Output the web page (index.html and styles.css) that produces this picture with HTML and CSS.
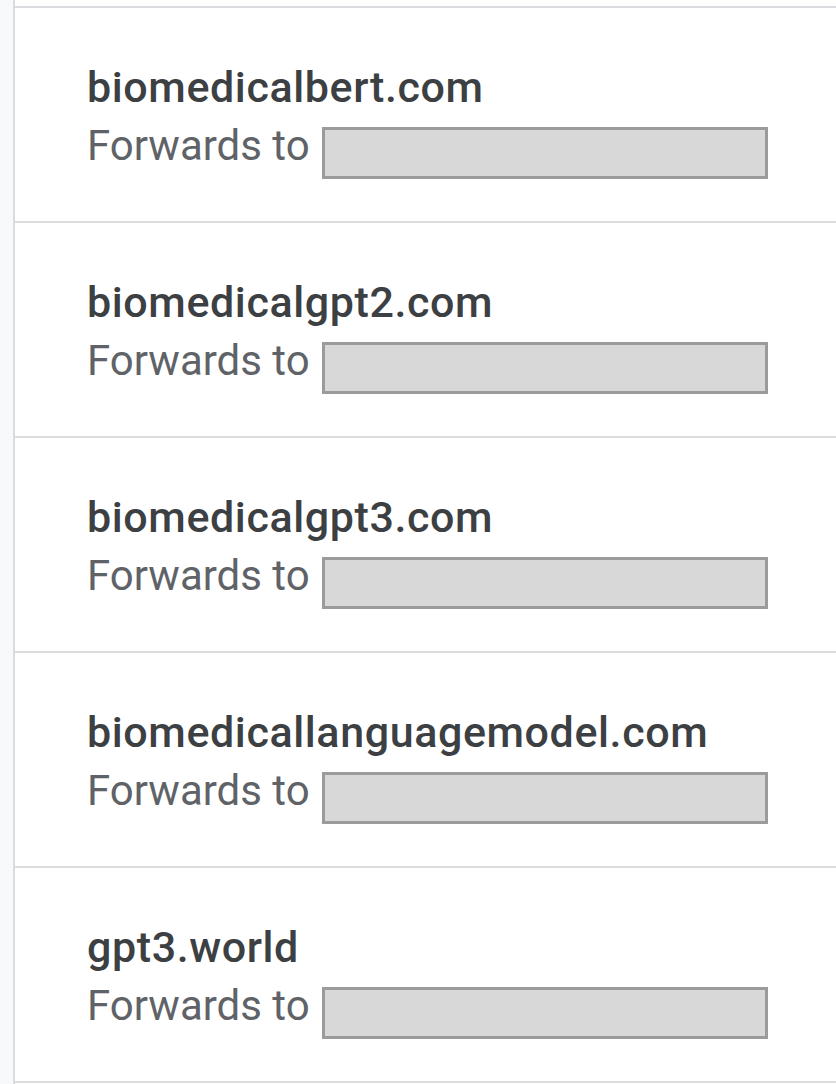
FILE: index.html
```html
<!DOCTYPE html>
<html lang="en">
<head>
<meta charset="utf-8">
<title>Domains</title>
<link rel="stylesheet" href="styles.css">
</head>
<body>
<div class="page">
  <aside class="rail"></aside>
  <main class="list">
    <div class="spacer"></div>
    <section class="row">
      <div class="domain">biomedicalbert.com</div>
      <div class="fwd"><span class="label">Forwards to</span><span class="redact"></span></div>
    </section>
    <section class="row">
      <div class="domain">biomedicalgpt2.com</div>
      <div class="fwd"><span class="label">Forwards to</span><span class="redact"></span></div>
    </section>
    <section class="row">
      <div class="domain">biomedicalgpt3.com</div>
      <div class="fwd"><span class="label">Forwards to</span><span class="redact"></span></div>
    </section>
    <section class="row">
      <div class="domain">biomedicallanguagemodel.com</div>
      <div class="fwd"><span class="label">Forwards to</span><span class="redact"></span></div>
    </section>
    <section class="row">
      <div class="domain">gpt3.world</div>
      <div class="fwd"><span class="label">Forwards to</span><span class="redact"></span></div>
    </section>
    <div class="end"></div>
  </main>
</div>
</body>
</html>
```
FILE: styles.css
```css
html, body {
  margin: 0;
  padding: 0;
  background: #ffffff;
}
.page {
  display: flex;
  height: 1084px;
  overflow: hidden;
}
.rail {
  width: 13px;
  flex: none;
  background: #f8f9fa;
  border-right: 2px solid #dadce0;
}
.list {
  flex: 1;
  display: flex;
  flex-direction: column;
}
.spacer {
  height: 6px;
  flex: none;
}
.row {
  box-sizing: border-box;
  height: 215px;
  flex: none;
  border-top: 2px solid #dadce0;
  padding: 51px 0 0 72px;
  display: flex;
  flex-direction: column;
}
.end {
  border-top: 2px solid #dadce0;
}
.domain {
  font-family: Roboto, "Liberation Sans", sans-serif;
  font-weight: 500;
  font-size: 43px;
  line-height: 56px;
  color: #3c4043;
  letter-spacing: 0.6px;
}
.fwd {
  display: flex;
  align-items: flex-start;
  gap: 12px;
  margin-top: 5px;
}
.label {
  font-family: Roboto, "Liberation Sans", sans-serif;
  font-size: 42px;
  line-height: 52px;
  color: #5f6368;
}
.redact {
  box-sizing: border-box;
  width: 446px;
  height: 52px;
  margin-top: 7px;
  background: #d8d8d8;
  border: 3px solid #9b9b9b;
}
```
